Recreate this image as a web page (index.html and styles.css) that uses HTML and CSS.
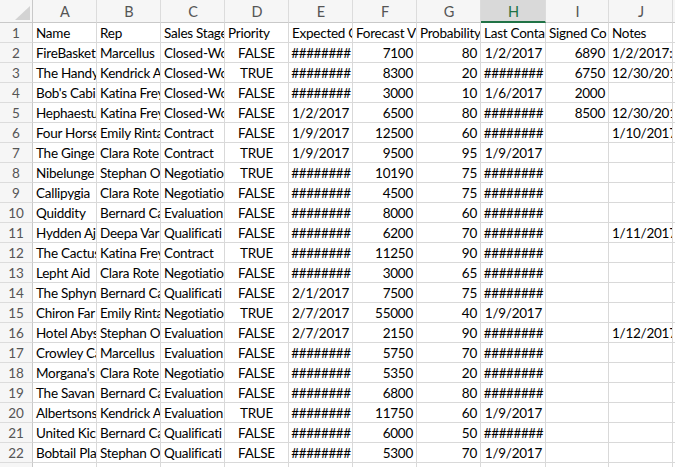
FILE: index.html
```html
<!DOCTYPE html>
<html>
<head>
<meta charset="utf-8">
<link rel="stylesheet" href="styles.css">
</head>
<body>
<div class="sheet">
  <div class="row head">
    <div class="corner"><span class="tri"></span></div>
    <div class="ch">A</div><div class="ch">B</div><div class="ch">C</div><div class="ch">D</div><div class="ch">E</div>
    <div class="ch">F</div><div class="ch">G</div><div class="ch sel">H</div><div class="ch">I</div><div class="ch">J</div><div class="ch"></div>
  </div>
  <div class="row"><div class="rh">1</div><div class="c">Name</div><div class="c">Rep</div><div class="c">Sales Stage</div><div class="c">Priority</div><div class="c">Expected C</div><div class="c">Forecast V</div><div class="c">Probability</div><div class="c">Last Conta</div><div class="c">Signed Co</div><div class="c">Notes</div><div class="c"></div></div>
  <div class="row"><div class="rh">2</div><div class="c">FireBasket</div><div class="c">Marcellus</div><div class="c">Closed-Won</div><div class="c m">FALSE</div><div class="c m h">########</div><div class="c r">7100</div><div class="c r">80</div><div class="c r">1/2/2017</div><div class="c r">6890</div><div class="c">1/2/2017:</div><div class="c"></div></div>
  <div class="row"><div class="rh">3</div><div class="c">The Handy</div><div class="c">Kendrick A</div><div class="c">Closed-Won</div><div class="c m">TRUE</div><div class="c m h">########</div><div class="c r">8300</div><div class="c r">20</div><div class="c m h">########</div><div class="c r">6750</div><div class="c">12/30/201</div><div class="c"></div></div>
  <div class="row"><div class="rh">4</div><div class="c">Bob's Cabi</div><div class="c">Katina Frey</div><div class="c">Closed-Won</div><div class="c m">FALSE</div><div class="c m h">########</div><div class="c r">3000</div><div class="c r">10</div><div class="c r">1/6/2017</div><div class="c r">2000</div><div class="c"></div><div class="c"></div></div>
  <div class="row"><div class="rh">5</div><div class="c">Hephaestu</div><div class="c">Katina Frey</div><div class="c">Closed-Won</div><div class="c m">FALSE</div><div class="c r">1/2/2017</div><div class="c r">6500</div><div class="c r">80</div><div class="c m h">########</div><div class="c r">8500</div><div class="c">12/30/201</div><div class="c"></div></div>
  <div class="row"><div class="rh">6</div><div class="c">Four Horse</div><div class="c">Emily Rinta</div><div class="c">Contract</div><div class="c m">FALSE</div><div class="c r">1/9/2017</div><div class="c r">12500</div><div class="c r">60</div><div class="c m h">########</div><div class="c r"></div><div class="c">1/10/2017</div><div class="c"></div></div>
  <div class="row"><div class="rh">7</div><div class="c">The Ginge</div><div class="c">Clara Rote</div><div class="c">Contract</div><div class="c m">TRUE</div><div class="c r">1/9/2017</div><div class="c r">9500</div><div class="c r">95</div><div class="c r">1/9/2017</div><div class="c r"></div><div class="c"></div><div class="c"></div></div>
  <div class="row"><div class="rh">8</div><div class="c">Nibelunge</div><div class="c">Stephan O</div><div class="c">Negotiation</div><div class="c m">TRUE</div><div class="c m h">########</div><div class="c r">10190</div><div class="c r">75</div><div class="c m h">########</div><div class="c r"></div><div class="c"></div><div class="c"></div></div>
  <div class="row"><div class="rh">9</div><div class="c">Callipygia</div><div class="c">Clara Rote</div><div class="c">Negotiation</div><div class="c m">FALSE</div><div class="c m h">########</div><div class="c r">4500</div><div class="c r">75</div><div class="c m h">########</div><div class="c r"></div><div class="c"></div><div class="c"></div></div>
  <div class="row"><div class="rh">10</div><div class="c">Quiddity</div><div class="c">Bernard Ca</div><div class="c">Evaluation</div><div class="c m">FALSE</div><div class="c m h">########</div><div class="c r">8000</div><div class="c r">60</div><div class="c m h">########</div><div class="c r"></div><div class="c"></div><div class="c"></div></div>
  <div class="row"><div class="rh">11</div><div class="c">Hydden Aj</div><div class="c">Deepa Var</div><div class="c">Qualificati</div><div class="c m">FALSE</div><div class="c m h">########</div><div class="c r">6200</div><div class="c r">70</div><div class="c m h">########</div><div class="c r"></div><div class="c">1/11/2017</div><div class="c"></div></div>
  <div class="row"><div class="rh">12</div><div class="c">The Cactus</div><div class="c">Katina Frey</div><div class="c">Contract</div><div class="c m">TRUE</div><div class="c m h">########</div><div class="c r">11250</div><div class="c r">90</div><div class="c m h">########</div><div class="c r"></div><div class="c"></div><div class="c"></div></div>
  <div class="row"><div class="rh">13</div><div class="c">Lepht Aid</div><div class="c">Clara Rote</div><div class="c">Negotiation</div><div class="c m">FALSE</div><div class="c m h">########</div><div class="c r">3000</div><div class="c r">65</div><div class="c m h">########</div><div class="c r"></div><div class="c"></div><div class="c"></div></div>
  <div class="row"><div class="rh">14</div><div class="c">The Sphyn</div><div class="c">Bernard Ca</div><div class="c">Qualificati</div><div class="c m">FALSE</div><div class="c r">2/1/2017</div><div class="c r">7500</div><div class="c r">75</div><div class="c m h">########</div><div class="c r"></div><div class="c"></div><div class="c"></div></div>
  <div class="row"><div class="rh">15</div><div class="c">Chiron Far</div><div class="c">Emily Rinta</div><div class="c">Negotiation</div><div class="c m">TRUE</div><div class="c r">2/7/2017</div><div class="c r">55000</div><div class="c r">40</div><div class="c r">1/9/2017</div><div class="c r"></div><div class="c"></div><div class="c"></div></div>
  <div class="row"><div class="rh">16</div><div class="c">Hotel Abys</div><div class="c">Stephan O</div><div class="c">Evaluation</div><div class="c m">FALSE</div><div class="c r">2/7/2017</div><div class="c r">2150</div><div class="c r">90</div><div class="c m h">########</div><div class="c r"></div><div class="c">1/12/2017</div><div class="c"></div></div>
  <div class="row"><div class="rh">17</div><div class="c">Crowley Ca</div><div class="c">Marcellus</div><div class="c">Evaluation</div><div class="c m">FALSE</div><div class="c m h">########</div><div class="c r">5750</div><div class="c r">70</div><div class="c m h">########</div><div class="c r"></div><div class="c"></div><div class="c"></div></div>
  <div class="row"><div class="rh">18</div><div class="c">Morgana's</div><div class="c">Clara Rote</div><div class="c">Negotiation</div><div class="c m">FALSE</div><div class="c m h">########</div><div class="c r">5350</div><div class="c r">20</div><div class="c m h">########</div><div class="c r"></div><div class="c"></div><div class="c"></div></div>
  <div class="row"><div class="rh">19</div><div class="c">The Savan</div><div class="c">Bernard Ca</div><div class="c">Evaluation</div><div class="c m">FALSE</div><div class="c m h">########</div><div class="c r">6800</div><div class="c r">80</div><div class="c m h">########</div><div class="c r"></div><div class="c"></div><div class="c"></div></div>
  <div class="row"><div class="rh">20</div><div class="c">Albertsons</div><div class="c">Kendrick A</div><div class="c">Evaluation</div><div class="c m">TRUE</div><div class="c m h">########</div><div class="c r">11750</div><div class="c r">60</div><div class="c r">1/9/2017</div><div class="c r"></div><div class="c"></div><div class="c"></div></div>
  <div class="row"><div class="rh">21</div><div class="c">United Kic</div><div class="c">Bernard Ca</div><div class="c">Qualificati</div><div class="c m">FALSE</div><div class="c m h">########</div><div class="c r">6000</div><div class="c r">50</div><div class="c m h">########</div><div class="c r"></div><div class="c"></div><div class="c"></div></div>
  <div class="row"><div class="rh">22</div><div class="c">Bobtail Pla</div><div class="c">Stephan O</div><div class="c">Qualificati</div><div class="c m">FALSE</div><div class="c m h">########</div><div class="c r">5300</div><div class="c r">70</div><div class="c r">1/9/2017</div><div class="c r"></div><div class="c"></div><div class="c"></div></div>
  <div class="row"><div class="rh">23</div><div class="c"></div><div class="c"></div><div class="c"></div><div class="c"></div><div class="c"></div><div class="c"></div><div class="c"></div><div class="c"></div><div class="c"></div><div class="c"></div><div class="c"></div></div>
</div>
</body>
</html>
```

FILE: styles.css
```css
html, body {
  margin: 0;
  padding: 0;
  background: #ffffff;
  overflow: hidden;
}

.sheet {
  font-family: Lato, "Open Sans", "Liberation Sans", sans-serif;
  font-size: 13.5px;
  letter-spacing: -0.25px;
  color: #000;
  width: 675px;
  height: 467px;
  overflow: hidden;
}

.row {
  display: grid;
  grid-template-columns: 33px repeat(7, 64px) 65px 63px 64px 2px;
  height: 20px;
}

.row > div {
  box-sizing: border-box;
  border-right: 1px solid #d9d9d9;
  border-bottom: 1px solid #d9d9d9;
  overflow: hidden;
  white-space: nowrap;
  line-height: 20px;
  padding: 0 2px 0 3px;
}

.row.head {
  height: 23px;
}

.row.head > div {
  background: #f6f6f6;
  border-bottom: 1px solid #c9c9c9;
  border-right: 1px solid #dcdcdc;
  color: #555;
  text-align: center;
  line-height: 23px;
  font-size: 14.5px;
  letter-spacing: 0;
}

.row.head > .corner {
  position: relative;
  border-right: 1px solid #c9c9c9;
}

.tri {
  position: absolute;
  right: 2px;
  bottom: 2px;
  width: 0;
  height: 0;
  border-left: 15px solid transparent;
  border-bottom: 14px solid #d3d3d3;
}

.row.head > .ch.sel {
  background: #d9d9d9;
  color: #207245;
  border-bottom: 2px solid #217346;
}

.row > .rh {
  background: #f6f6f6;
  color: #555;
  text-align: center;
  letter-spacing: 0;
  border-right: 1px solid #c9c9c9;
  border-bottom: 1px solid #dcdcdc;
  padding: 0;
}

.row > .r {
  text-align: right;
  padding-right: 3px;
}

.row > .m {
  text-align: center;
  padding: 0;
}

.row > .h {
  letter-spacing: -0.4px;
  font-size: 13.5px;
  font-weight: 400;
  padding-left: 1px;
}
```
